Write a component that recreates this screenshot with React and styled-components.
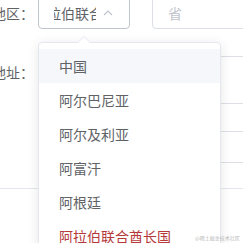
import React from 'react'
import styled, { createGlobalStyle } from 'styled-components'

const Global = createGlobalStyle`
body{
  margin: 0;
  overflow: hidden;
  background: #fff;
  font-family: "Noto Sans CJK SC", "Noto Sans", sans-serif;
}
`

const Page = styled.div`
position: relative;
margin: -3px 0 0 -12px;
width: 400px;
height: 260px;
`

const Row = styled.div`
display: flex;
align-items: flex-start;
margin-top: ${p => p.top || 0}px;
`

const Label = styled.label`
width: 50px;
flex-shrink: 0;
box-sizing: border-box;
display: flex;
justify-content: flex-end;
padding-right: 4px;
white-space: nowrap;
line-height: 32px;
height: 32px;
font-size: 14px;
color: #606266;
`

const Selects = styled.div`
display: flex;
gap: 22px;
`

const SelectBox = styled.div`
box-sizing: border-box;
width: ${p => p.width}px;
height: 32px;
display: flex;
align-items: center;
padding: 0 14px 0 15px;
border: 1px solid ${p => p.active ? '#c0c4cc' : '#dcdfe6'};
border-radius: 4px;
font-size: 14px;
color: ${p => p.placeholder ? '#c0c4cc' : '#606266'};
`

const SelectText = styled.div`
flex: 1;
overflow: hidden;
white-space: nowrap;
margin-right: 5px;
`

const Scrolled = styled.span`
display: inline-block;
margin-left: -21px;
`

const Box = styled.div`
box-sizing: border-box;
width: 260px;
height: ${p => p.height}px;
border: 1px solid #dcdfe6;
border-radius: 4px;
`

const Divider = styled.div`
margin-top: 25px;
border-top: 1px solid #e4e7ed;
`

const Dropdown = styled.div`
position: absolute;
left: 50px;
top: 45px;
width: 183px;
box-sizing: border-box;
padding: 6px 0;
border: 1px solid #e4e7ed;
border-radius: 4px;
background: #fff;
box-shadow: 0 2px 12px rgba(0,0,0,0.1);
`

const Arrow = styled.div`
position: absolute;
top: -7px;
left: 39px;
width: 0;
height: 0;
border: 6px solid transparent;
border-top: 0;
border-bottom-color: #e4e7ed;
&::after{
  content: '';
  position: absolute;
  top: 1px;
  left: -6px;
  border: 6px solid transparent;
  border-top: 0;
  border-bottom-color: #fff;
}
`

const Item = styled.div`
height: 34px;
line-height: 34px;
padding: 0 20px;
font-size: 14px;
color: ${p => p.selected ? '#b5383b' : '#606266'};
background: ${p => p.hover ? '#f5f7fa' : 'transparent'};
white-space: nowrap;
`

const Watermark = styled.div`
position: absolute;
left: 207px;
top: 237px;
font-size: 5px;
color: #b8b8b8;
white-space: nowrap;
`

const ChevronUp = () => (
  <svg width="14" height="14" viewBox="0 0 14 14">
    <polyline points="3,9 7,5 11,9" fill="none" stroke="#c0c4cc" strokeWidth="1.2" />
  </svg>
)

const countries = ['中国', '阿尔巴尼亚', '阿尔及利亚', '阿富汗', '阿根廷', '阿拉伯联合酋长国']

const App = () => {
  return (
    <Page>
      <Global />
      <Row>
        <Label>地区：</Label>
        <Selects>
          <SelectBox width={92} active>
            <SelectText><Scrolled>阿拉伯联合酋长国</Scrolled></SelectText>
            <ChevronUp />
          </SelectBox>
          <SelectBox width={120} placeholder>
            <SelectText>省</SelectText>
          </SelectBox>
        </Selects>
      </Row>
      <Row top={27}>
        <Label>地址：</Label>
        <Box height={48} />
      </Row>
      <Row top={27}>
        <Label />
        <Box height={32} />
      </Row>
      <Divider />
      <Dropdown>
        <Arrow />
        {countries.map((c, i) => (
          <Item key={c} hover={i === 0} selected={i === countries.length - 1}>{c}</Item>
        ))}
      </Dropdown>
      <Watermark>@稀土掘金技术社区</Watermark>
    </Page>
  )
}

export default App
